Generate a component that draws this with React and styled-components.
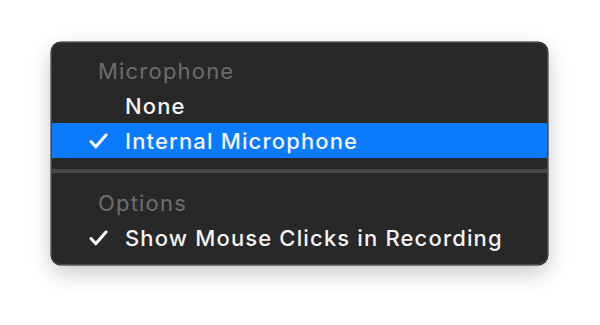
import React from "react";
import styled, { createGlobalStyle } from "styled-components";

const GlobalStyle = createGlobalStyle`
  html, body {
    margin: 0;
    padding: 0;
    background: #ffffff;
  }
`;

const Page = styled.div`
  width: 600px;
  height: 325px;
  box-sizing: border-box;
  padding: 42px 52px 0 51px;
  font-family: Inter, "Liberation Sans", Arial, sans-serif;
`;

const Menu = styled.div`
  box-sizing: border-box;
  width: 497px;
  height: 223px;
  padding: 11px 0 9px;
  background: #282828;
  border-radius: 10px;
  border: 1px solid #4a4a4a;
  box-shadow: 0 0 0 0.5px #1a1a1a, 0 8px 22px rgba(0, 0, 0, 0.22);
  display: flex;
  flex-direction: column;
`;

const Header = styled.div`
  height: 35px;
  display: flex;
  align-items: center;
  padding-left: 46px;
  font-size: 22px;
  letter-spacing: 1.2px;
  color: #6d6d6d;
`;

const Item = styled.div`
  height: 35px;
  display: flex;
  align-items: center;
  font-size: 22px;
  font-weight: 500;
  letter-spacing: 1.15px;
  color: #f4f4f4;
  background: ${(p) => (p.$active ? "#0a7bff" : "transparent")};
`;

const CheckSlot = styled.span`
  width: 73px;
  display: flex;
  justify-content: flex-end;
  padding-right: 17px;
  box-sizing: border-box;
`;

const Separator = styled.div`
  height: 4px;
  margin: 11px 0 13px;
  background: #464646;
`;

function Check() {
  return (
    <svg width="19" height="16" viewBox="0 0 19 16">
      <path
        d="M2 8.6 L6.8 13.8 L17 2"
        fill="none"
        stroke="#ffffff"
        strokeWidth="3"
        strokeLinecap="round"
        strokeLinejoin="round"
      />
    </svg>
  );
}

function MenuItem({ checked, active, children }) {
  return (
    <Item $active={active}>
      <CheckSlot>{checked && <Check />}</CheckSlot>
      {children}
    </Item>
  );
}

export default function App() {
  return (
    <>
      <GlobalStyle />
      <Page>
        <Menu>
          <Header>Microphone</Header>
          <MenuItem>None</MenuItem>
          <MenuItem checked active>
            Internal Microphone
          </MenuItem>
          <Separator />
          <Header>Options</Header>
          <MenuItem checked>Show Mouse Clicks in Recording</MenuItem>
        </Menu>
      </Page>
    </>
  );
}
